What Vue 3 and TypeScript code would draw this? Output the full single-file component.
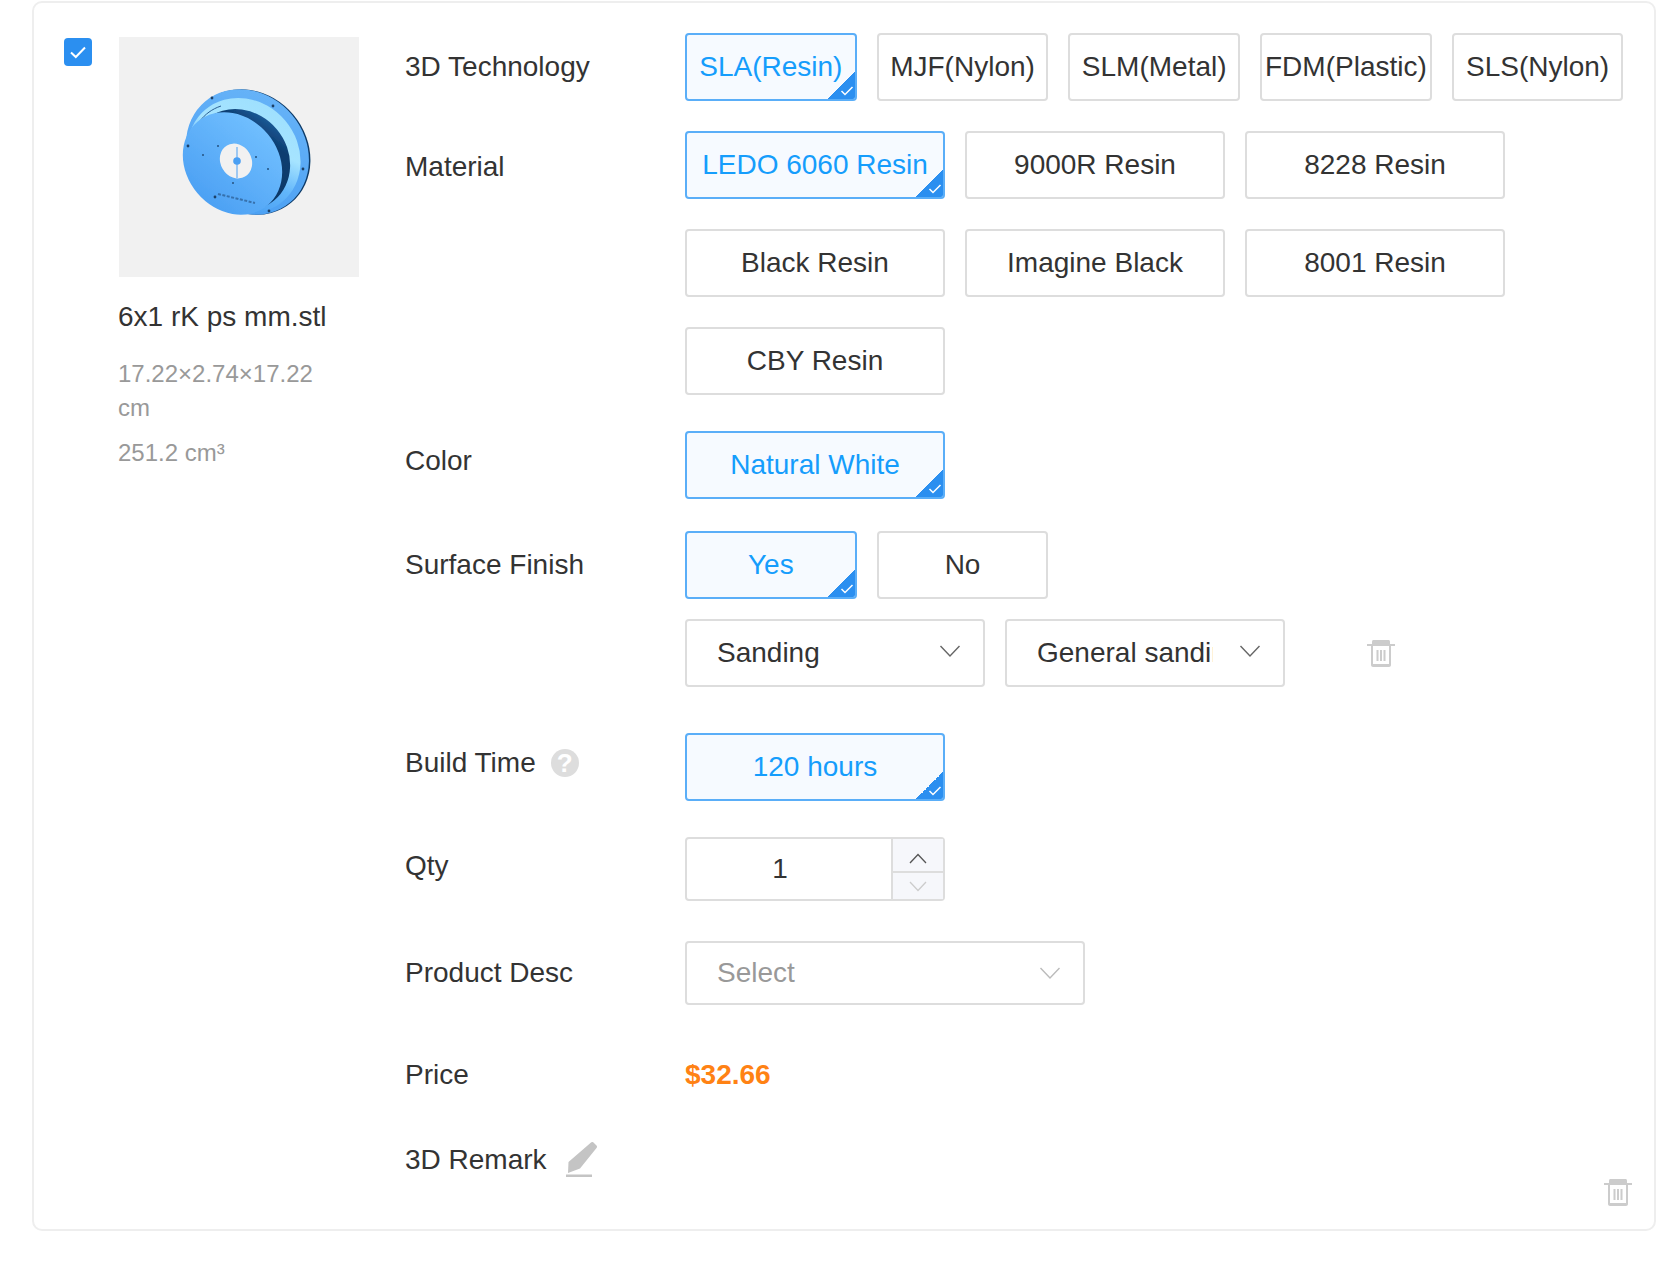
<script setup lang="ts">
const techs = [
  { name: 'SLA(Resin)', on: true },
  { name: 'MJF(Nylon)', on: false },
  { name: 'SLM(Metal)', on: false },
  { name: 'FDM(Plastic)', on: false },
  { name: 'SLS(Nylon)', on: false },
]
const materials = [
  { name: 'LEDO 6060 Resin', on: true },
  { name: '9000R Resin', on: false },
  { name: '8228 Resin', on: false },
  { name: 'Black Resin', on: false },
  { name: 'Imagine Black', on: false },
  { name: '8001 Resin', on: false },
  { name: 'CBY Resin', on: false },
]
const holes: [number, number][] = [[93, 61], [154, 69], [69, 109], [184, 132], [150, 174], [96, 160]]
const inner: [number, number][] = [[99, 109], [84, 118], [137, 120], [149, 132], [114, 146]]
</script>

<template>
  <div class="page">
    <div class="card">
      <div class="check">
        <svg width="28" height="28" viewBox="0 0 28 28"><path d="M7 14.500l4.800 4.500L21 9.500" fill="none" stroke="#fff" stroke-width="2" /></svg>
      </div>
      <div class="side">
        <div class="thumb">
          <svg width="240" height="240" viewBox="0 0 240 240">
            <defs>
              <linearGradient id="base" gradientUnits="userSpaceOnUse" x1="80" y1="60" x2="150" y2="180">
                <stop offset="0" stop-color="#68b4f8" />
                <stop offset="1" stop-color="#4a9ff3" />
              </linearGradient>
              <linearGradient id="ring" gradientUnits="userSpaceOnUse" x1="115" y1="62" x2="165" y2="172">
                <stop offset="0" stop-color="#9fe0fe" />
                <stop offset="0.32" stop-color="#a6e4ff" />
                <stop offset="0.58" stop-color="#62b6fb" />
                <stop offset="1" stop-color="#3f96ef" />
              </linearGradient>
              <linearGradient id="face" gradientUnits="userSpaceOnUse" x1="105" y1="75" x2="125" y2="178">
                <stop offset="0" stop-color="#72c0ff" />
                <stop offset="1" stop-color="#4a9ff3" />
              </linearGradient>
              <linearGradient id="band" gradientUnits="userSpaceOnUse" x1="120" y1="68" x2="150" y2="176">
                <stop offset="0" stop-color="#1f5f9f" />
                <stop offset="0.2" stop-color="#0c3d70" />
                <stop offset="0.62" stop-color="#0b3766" />
                <stop offset="0.85" stop-color="#2f78c4" />
                <stop offset="1" stop-color="#4a9ff3" />
              </linearGradient>
              <filter id="soft" x="-10%" y="-10%" width="120%" height="120%"><feGaussianBlur stdDeviation="0.500" /></filter>
            </defs>
            <g filter="url(#soft)">
              <ellipse cx="130" cy="115" rx="66" ry="58" transform="rotate(50 130 115)" fill="#0f3b68" />
              <ellipse cx="128.500" cy="115" rx="66" ry="58" transform="rotate(50 128.500 115)" fill="url(#base)" />
              <ellipse cx="125" cy="118.500" rx="60" ry="54" transform="rotate(50 125 118.500)" fill="url(#ring)" />
              <path d="M72 108c2-18 12-33 30-39" fill="none" stroke="#2b5f95" stroke-width="1" />
              <ellipse cx="121" cy="123" rx="53" ry="48" transform="rotate(50 121 123)" fill="url(#band)" />
              <ellipse cx="113.500" cy="126.500" rx="54.500" ry="46" transform="rotate(50 113.500 126.500)" fill="url(#face)" />
              <ellipse cx="117" cy="124" rx="15.500" ry="18" transform="rotate(-30 117 124)" fill="#f1f1f1" />
              <path d="M118 110v31" stroke="#4a9ff3" stroke-width="1" />
              <circle cx="118" cy="124" r="3.800" fill="#4a9ff3" />
              <circle v-for="(h, i) in holes" :key="'h' + i" :cx="h[0]" :cy="h[1]" r="1.400" fill="#1d3f66" />
              <circle v-for="(h, i) in inner" :key="'n' + i" :cx="h[0]" :cy="h[1]" r="1" fill="#23527f" />
              <path d="M99 157l37 9" stroke="#2a5a8e" stroke-width="2" stroke-dasharray="3 1.500" opacity="0.7" />
            </g>
          </svg>
        </div>
        <div class="file">6x1 rK ps mm.stl</div>
        <div class="dims">17.22×2.74×17.22 cm</div>
        <div class="vol">251.2 cm³</div>
      </div>
      <div class="form">
        <div class="row row-tech">
          <div class="label l-tech">3D Technology</div>
          <div class="opts">
            <div v-for="t in techs" :key="t.name" class="opt small" :class="{ on: t.on }">
              {{ t.name }}
              <span v-if="t.on" class="tick"><svg width="14" height="12" viewBox="0 0 14 12"><path d="M1.500 6l3.500 3.500L12.500 2" fill="none" stroke="#fff" stroke-width="1.500" /></svg></span>
            </div>
          </div>
        </div>
        <div class="row row-mat">
          <div class="label l-mat">Material</div>
          <div class="opts">
            <div v-for="m in materials" :key="m.name" class="opt wide" :class="{ on: m.on }">
              {{ m.name }}
              <span v-if="m.on" class="tick"><svg width="14" height="12" viewBox="0 0 14 12"><path d="M1.500 6l3.500 3.500L12.500 2" fill="none" stroke="#fff" stroke-width="1.500" /></svg></span>
            </div>
          </div>
        </div>
        <div class="row row-color">
          <div class="label l-color">Color</div>
          <div class="opts">
            <div class="opt wide on">Natural White
              <span class="tick"><svg width="14" height="12" viewBox="0 0 14 12"><path d="M1.500 6l3.500 3.500L12.500 2" fill="none" stroke="#fff" stroke-width="1.500" /></svg></span>
            </div>
          </div>
        </div>
        <div class="row row-finish">
          <div class="label">Surface Finish</div>
          <div class="opts">
            <div class="opt small on">Yes
              <span class="tick"><svg width="14" height="12" viewBox="0 0 14 12"><path d="M1.500 6l3.500 3.500L12.500 2" fill="none" stroke="#fff" stroke-width="1.500" /></svg></span>
            </div>
            <div class="opt small">No</div>
          </div>
        </div>
        <div class="row row-sel">
          <div class="label"></div>
          <div class="selects">
            <div class="select s-a">
              <span class="val">Sanding</span>
              <svg class="caret" width="22" height="14" viewBox="0 0 22 14"><path d="M1.500 2L11 12l9.500-10" fill="none" stroke="#666" stroke-width="1.400" /></svg>
            </div>
            <div class="select s-b">
              <span class="val">General sanding</span>
              <svg class="caret" width="22" height="14" viewBox="0 0 22 14"><path d="M1.500 2L11 12l9.500-10" fill="none" stroke="#666" stroke-width="1.400" /></svg>
            </div>
            <svg class="trash-a" width="28" height="27" viewBox="0 0 28 27"><g fill="#ccc"><path d="M5 1.500C5 .7 5.700 0 6.500 0h15c.8 0 1.500.7 1.500 1.500V4H5z" /><rect x="0" y="4" width="28" height="2" /><path fill-rule="evenodd" d="M4 6h2v18h16V6h2v19c0 1-1 2-2 2H6c-1 0-2-1-2-2z" /><rect x="9.500" y="10" width="2" height="11" /><rect x="13" y="10" width="2" height="11" /><rect x="16.500" y="10" width="2" height="11" /></g></svg>
          </div>
        </div>
        <div class="row row-build">
          <div class="label l-build">
            Build Time
            <span class="help">?</span>
          </div>
          <div class="opts">
            <div class="opt wide on">120 hours
              <span class="tick"><svg width="14" height="12" viewBox="0 0 14 12"><path d="M1.500 6l3.500 3.500L12.500 2" fill="none" stroke="#fff" stroke-width="1.500" /></svg></span>
            </div>
          </div>
        </div>
        <div class="row row-qty">
          <div class="label l-qty">Qty</div>
          <div class="spin">
            <div class="spin-val">1</div>
            <div class="spin-btns">
              <div class="spin-btn up"><svg width="18" height="11" viewBox="0 0 18 11"><path d="M1 10l8-8.500L17 10" fill="none" stroke="#555" stroke-width="1.300" /></svg></div>
              <div class="spin-btn down"><svg width="18" height="11" viewBox="0 0 18 11"><path d="M1 1l8 8.500L17 1" fill="none" stroke="#ccc" stroke-width="1.300" /></svg></div>
            </div>
          </div>
        </div>
        <div class="row row-desc">
          <div class="label l-desc">Product Desc</div>
          <div class="select s-c">
            <span class="val ph">Select</span>
            <svg class="caret" width="22" height="14" viewBox="0 0 22 14"><path d="M1.500 2L11 12l9.500-10" fill="none" stroke="#bbb" stroke-width="1.400" /></svg>
          </div>
        </div>
        <div class="row row-price">
          <div class="label">Price</div>
          <div class="price">$32.66</div>
        </div>
        <div class="row row-remark">
          <div class="label l-remark">
            3D Remark
            <svg class="pen" width="31" height="35" viewBox="0 0 31 35"><path fill="#c4c4c4" d="M25 0.500c.8-.7 1.800-.7 2.500 0l3 3c.7.8.7 1.800 0 2.500L14 26.500 2 31l.5-11z" /><rect x="0" y="32.500" width="26" height="2.500" fill="#c4c4c4" /></svg>
          </div>
        </div>
      </div>
      <svg class="trash-b" width="28" height="27" viewBox="0 0 28 27"><g fill="#ccc"><path d="M5 1.500C5 .7 5.700 0 6.500 0h15c.8 0 1.500.7 1.500 1.500V4H5z" /><rect x="0" y="4" width="28" height="2" /><path fill-rule="evenodd" d="M4 6h2v18h16V6h2v19c0 1-1 2-2 2H6c-1 0-2-1-2-2z" /><rect x="9.500" y="10" width="2" height="11" /><rect x="13" y="10" width="2" height="11" /><rect x="16.500" y="10" width="2" height="11" /></g></svg>
    </div>
  </div>
</template>

<style>
html, body { margin: 0; background: #fff; }
</style>

<style scoped>
.page {
  width: 1667px;
  height: 1261px;
  padding: 1px 11px 0 32px;
  box-sizing: border-box;
  font-family: "Liberation Sans", Arial, sans-serif;
  color: #333;
  font-size: 28px;
}
.card {
  position: relative;
  display: flex;
  height: 1230px;
  box-sizing: border-box;
  border: 2px solid #eee;
  border-radius: 10px;
  padding: 30px 0 0 30px;
}
.check {
  width: 28px;
  height: 28px;
  margin-top: 5px;
  border-radius: 4px;
  background: #2b8ff0;
  flex: none;
}
.side {
  width: 240px;
  margin-left: 27px;
  margin-top: 4px;
  flex: none;
}
.thumb {
  width: 240px;
  height: 240px;
  background: #f1f1f1;
}
.thumb svg { display: block; }
.file {
  margin: 23px 0 0 -1px;
  line-height: 34px;
  white-space: nowrap;
  color: #333;
}
.dims {
  margin: 23px 0 0 -1px;
  width: 210px;
  font-size: 24px;
  line-height: 34px;
  color: #999;
}
.vol {
  margin: 11px 0 0 -1px;
  font-size: 24px;
  line-height: 34px;
  color: #999;
}
.form {
  margin-left: 46px;
  flex: 1;
}
.row {
  display: flex;
  align-items: flex-start;
}
.label {
  width: 280px;
  flex: none;
  line-height: 34px;
  color: #333;
  display: flex;
  align-items: center;
  padding-top: 17px;
}
.l-tech { padding-top: 17px; }
.l-mat { padding-top: 19px; }
.l-color { padding-top: 13px; }
.l-build { padding-top: 13px; }
.l-qty { padding-top: 12px; }
.l-desc { padding-top: 15px; }
.row-mat { margin-top: 30px; }
.row-color { margin-top: 36px; }
.row-finish { margin-top: 32px; }
.row-sel { margin-top: 20px; }
.row-sel .label { padding: 0; }
.row-build { margin-top: 46px; }
.row-qty { margin-top: 36px; }
.row-desc { margin-top: 40px; }
.row-price { margin-top: 53px; }
.row-price .label { padding-top: 0; }
.row-remark { margin-top: 51px; }
.row-remark .label { padding-top: 0; }
.opts {
  display: flex;
  flex-wrap: wrap;
  gap: 30px 20px;
  width: 950px;
}
.opt {
  position: relative;
  box-sizing: border-box;
  height: 68px;
  border: 2px solid #ddd;
  border-radius: 4px;
  display: flex;
  align-items: center;
  justify-content: center;
  white-space: nowrap;
  overflow: hidden;
  color: #333;
}
.small { width: 171.700px; }
.wide { width: 260px; }
.on {
  border-color: #5aaef8;
  background: #f6faff;
  color: #159dfc;
}
.tick {
  position: absolute;
  right: 0;
  bottom: 0;
  width: 27px;
  height: 27px;
  background: linear-gradient(135deg, transparent 50%, #2b8ff0 50%);
}
.tick svg {
  position: absolute;
  right: 1px;
  bottom: 2px;
}
.selects {
  display: flex;
  gap: 20px;
  align-items: flex-start;
}
.select {
  position: relative;
  box-sizing: border-box;
  height: 68px;
  border: 2px solid #ddd;
  border-radius: 4px;
  background: #fff;
  display: flex;
  align-items: center;
  padding-left: 30px;
}
.s-a { width: 300px; }
.s-b { width: 280px; }
.s-c { width: 400px; height: 64px; }
.val {
  display: block;
  white-space: nowrap;
  overflow: hidden;
  width: 176px;
}
.ph { color: #999; }
.caret {
  position: absolute;
  right: 22px;
  top: 23px;
}
.trash-a {
  margin: 21px 0 0 62px;
}
.help {
  width: 28px;
  height: 28px;
  margin-left: 15px;
  border-radius: 50%;
  background: #ddd;
  color: #fff;
  font-size: 26px;
  font-weight: bold;
  line-height: 28px;
  text-align: center;
}
.spin {
  box-sizing: border-box;
  width: 260px;
  height: 64px;
  border: 2px solid #ddd;
  border-radius: 4px;
  display: flex;
}
.spin-val {
  flex: 1;
  text-align: center;
  line-height: 60px;
  padding-right: 18px;
}
.spin-btns {
  width: 50px;
  border-left: 2px solid #ddd;
  display: flex;
  flex-direction: column;
}
.spin-btn {
  flex: 1;
  background: #f6f7fb;
  display: flex;
  align-items: center;
  justify-content: center;
}
.spin-btn.up { padding-top: 6px; }
.spin-btn.down { padding-top: 0; }
.spin-btn + .spin-btn {
  border-top: 2px solid #ddd;
}
.price {
  color: #ff8214;
  font-weight: bold;
  line-height: 34px;
}
.pen {
  margin-left: 19px;
  margin-top: -1px;
}
.trash-b {
  position: absolute;
  right: 22px;
  bottom: 23px;
}
</style>
